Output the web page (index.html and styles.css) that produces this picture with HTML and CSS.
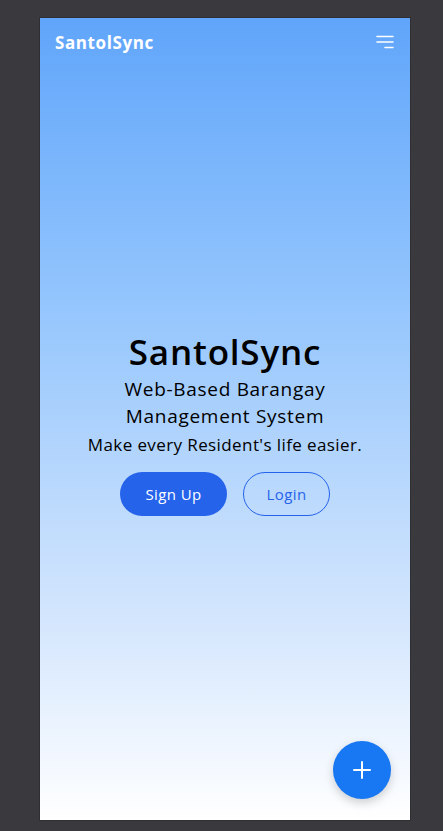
FILE: index.html
```html
<!DOCTYPE html>
<html lang="en">
<head>
<meta charset="utf-8">
<title>SantolSync</title>
<link rel="stylesheet" href="styles.css">
</head>
<body>
<div class="frame">
  <header class="topbar">
    <span class="brand">SantolSync</span>
    <button class="menu" aria-label="Menu">
      <svg width="18" height="14" viewBox="0 0 18 14"><path d="M1 1.5H17M1 7H17M9 12.5H17" stroke="#fff" stroke-width="1.6" stroke-linecap="round" fill="none"/></svg>
    </button>
  </header>
  <main class="hero">
    <h1 class="title">SantolSync</h1>
    <p class="subtitle">Web-Based Barangay<br>Management System</p>
    <p class="tagline">Make every Resident's life easier.</p>
    <div class="actions">
      <a class="btn btn-primary" href="#">Sign Up</a>
      <a class="btn btn-outline" href="#">Login</a>
    </div>
  </main>
  <button class="fab" aria-label="Add">
    <svg width="20" height="20" viewBox="0 0 20 20"><path d="M10 2V18M2 10H18" stroke="#fff" stroke-width="2" stroke-linecap="round"/></svg>
  </button>
</div>
</body>
</html>
```
FILE: styles.css
```css
html, body {
  margin: 0;
  padding: 0;
  background: #3a393d;
}
body {
  padding: 18px 0 0 40px;
  height: 831px;
  box-sizing: border-box;
  font-family: "Open Sans", "DejaVu Sans", sans-serif;
}
.frame {
  position: relative;
  width: 370px;
  height: 802px;
  background: linear-gradient(180deg, #60a5fa 0%, #93c5fd 35%, #d4e6fd 75%, #ffffff 100%);
  display: flex;
  flex-direction: column;
  box-shadow: 0 0 0 1px #2f2e32;
}
.topbar {
  display: flex;
  align-items: center;
  justify-content: space-between;
  padding: 14px 16px 0 15px;
  height: 20px;
}
.brand {
  color: #fff;
  font-weight: 700;
  font-size: 17px;
  letter-spacing: 0.6px;
}
.menu {
  background: none;
  border: 0;
  padding: 0;
  width: 18px;
  height: 14px;
  display: flex;
}
.hero {
  flex: 1;
  display: flex;
  flex-direction: column;
  align-items: center;
  justify-content: center;
  text-align: center;
  padding-bottom: 24px;
}
.title {
  margin: 0;
  font-size: 35px;
  font-weight: 600;
  color: #000;
  line-height: 40px;
  letter-spacing: 0.8px;
}
.subtitle {
  margin: 4px 0 0;
  font-size: 19px;
  line-height: 27px;
  color: #000;
  letter-spacing: 0.7px;
}
.tagline {
  margin: 3px 0 0;
  font-size: 17px;
  line-height: 24px;
  color: #000;
  letter-spacing: 0.4px;
}
.actions {
  display: flex;
  gap: 16px;
  margin-top: 15px;
}
.btn {
  height: 44px;
  border-radius: 22px;
  display: flex;
  align-items: center;
  justify-content: center;
  font-size: 15px;
  text-decoration: none;
  box-sizing: border-box;
  letter-spacing: 0.4px;
}
.btn-primary {
  width: 107px;
  background: #2563eb;
  color: #fff;
  font-weight: 500;
}
.btn-outline {
  width: 87px;
  border: 1px solid #2563eb;
  color: #2563eb;
}
.fab {
  position: absolute;
  right: 19px;
  bottom: 21px;
  width: 58px;
  height: 58px;
  border-radius: 50%;
  border: 0;
  background: #1877f2;
  display: flex;
  align-items: center;
  justify-content: center;
  box-shadow: 0 4px 10px rgba(0,0,0,0.18);
}
```
